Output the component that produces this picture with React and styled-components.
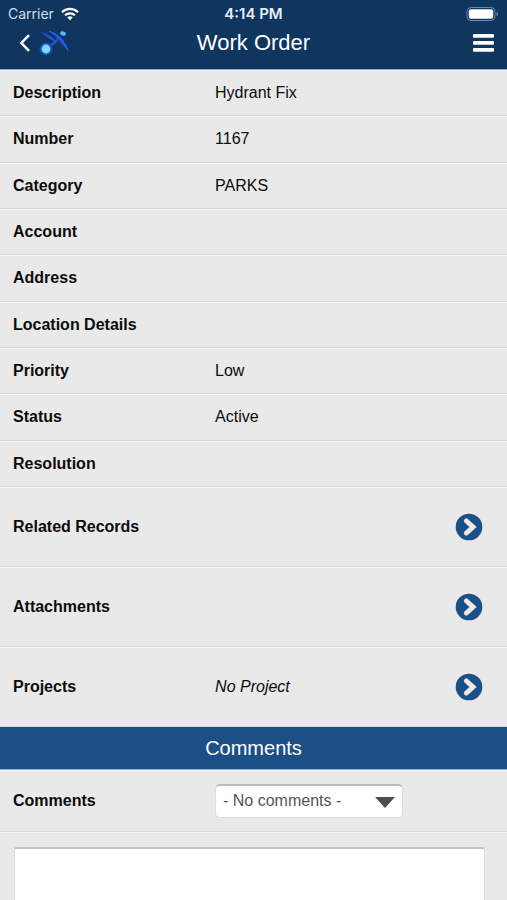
import React, { Fragment } from 'react';
import styled, { createGlobalStyle } from 'styled-components';

const facts = [
    ['Description', 'Hydrant Fix'],
    ['Number', '1167'],
    ['Category', 'PARKS'],
    ['Account', ''],
    ['Address', ''],
    ['Location Details', ''],
    ['Priority', 'Low'],
    ['Status', 'Active'],
    ['Resolution', ''],
];

const links = [
    { label: 'Related Records' },
    { label: 'Attachments' },
    { label: 'Projects', note: 'No Project' },
];

const WifiIcon = () => (
    <svg width='18' height='14' viewBox='0 0 18 14' fill='none' stroke='#fff' strokeWidth='2.2' aria-hidden='true'>
        <path d='M1 5.2a11.4 11.4 0 0 1 16 0' />
        <path d='M4 8.3a7.2 7.2 0 0 1 10 0' />
        <path d='M9 13.2L6.3 10.5a3.9 3.9 0 0 1 5.4 0z' fill='#fff' stroke='none' />
    </svg>
);

const BatteryIcon = () => (
    <svg width='33' height='16' viewBox='0 0 33 16' aria-hidden='true'>
        <rect x='1' y='1.5' width='28' height='13' rx='4' fill='none' stroke='#6a86a6' />
        <rect x='2.8' y='3.3' width='24.4' height='9.4' rx='2' fill='#fff' />
        <path d='M30.5 6v4q1.7-.6 1.7-2t-1.7-2z' fill='#6a86a6' />
    </svg>
);

const BackIcon = () => (
    <svg width='12' height='18' viewBox='0 0 12 18' fill='none' stroke='#fff' strokeWidth='2.5' aria-hidden='true'>
        <path d='M10 1.2L2.4 9l7.6 7.8' />
    </svg>
);

const Logo = () => (
    <svg width='32' height='28' viewBox='0 0 32 28' aria-hidden='true'>
        <path d='M2 3Q7 9 14 11.5Q11 7 2 3z' fill='#1a44c0' />
        <path d='M2 3Q10 4.5 19 13Q15 13 12 10.5Q8 6 2 3z' fill='#2155dc' />
        <path d='M9 1.5Q25 5 29.5 22.5Q25 18 21 13Q16 6 9 1.5z' fill='#1d4fd4' />
        <path d='M10 2Q23 7 29 21.5' fill='none' stroke='#3b78f0' strokeWidth='.8' />
        <path d='M18 10q-1 4-6 6' fill='none' stroke='#2257dc' strokeWidth='2' />
        <ellipse cx='24' cy='4.5' rx='3' ry='2' fill='#5fb0fb' transform='rotate(20 24 4.5)' />
        <circle cx='7' cy='20' r='6.5' fill='#1a4cc8' />
        <circle cx='7' cy='20' r='4.4' fill='#7fdcff' />
    </svg>
);

const MenuIcon = () => (
    <svg width='21' height='18' viewBox='0 0 21 18' fill='#fff' aria-hidden='true'>
        <rect width='21' height='3.8' rx='1' />
        <rect y='7' width='21' height='3.8' rx='1' />
        <rect y='14' width='21' height='3.8' rx='1' />
    </svg>
);

const GoIcon = () => (
    <svg width='28' height='28' viewBox='0 0 28 28' aria-hidden='true'>
        <circle cx='14' cy='14' r='13.3' fill='#1b4f86' />
        <path d='M11.4 8l6.6 6-6.6 6' fill='none' stroke='#ebebeb' strokeWidth='5' strokeLinecap='round' />
    </svg>
);

const App = () => (
    <Fragment>
        <GlobalStyle />
        <Page>
            <Header>
                <StatusBar>
                    <Carrier>Carrier <WifiIcon /></Carrier>
                    <Time>4:14 PM</Time>
                    <Battery><BatteryIcon /></Battery>
                </StatusBar>
                <NavBar>
                    <BackButton type='button' aria-label='Back'><BackIcon /><Logo /></BackButton>
                    <Title>Work Order</Title>
                    <MenuButton type='button' aria-label='Menu'><MenuIcon /></MenuButton>
                </NavBar>
            </Header>
            <Main>
                <FactList>
                    {facts.map(([label, value]) => (
                        <FactRow key={label}>
                            <dt>{label}</dt>
                            <dd>{value}</dd>
                        </FactRow>
                    ))}
                </FactList>
                {links.map(({ label, note }) => (
                    <LinkRow key={label}>
                        <strong>{label}</strong>
                        <em>{note}</em>
                        <GoButton type='button' aria-label={label}><GoIcon /></GoButton>
                    </LinkRow>
                ))}
                <SectionTitle>Comments</SectionTitle>
                <FilterRow>
                    <label htmlFor='comments'>Comments</label>
                    <SelectBox>
                        <Select id='comments'>
                            <option>- No comments -</option>
                        </Select>
                        <Arrow viewBox='0 0 20 11' aria-hidden='true'><path d='M0 0h20L10 11z' fill='#4d4d4d' /></Arrow>
                    </SelectBox>
                </FilterRow>
                <NoteRow>
                    <Note aria-label='New comment' />
                </NoteRow>
            </Main>
        </Page>
    </Fragment>
);

const GlobalStyle = createGlobalStyle`
    *, *::before, *::after {
        box-sizing: border-box;
    }

    body {
        margin: 0;
        background: #e9e9e9;
        color: #0c0c0c;
        font: 16px/20px "Liberation Sans", Arial, sans-serif;
    }

    button {
        display: flex;
        align-items: center;
        padding: 0;
        border: 0;
        background: none;
        cursor: pointer;
    }

    svg {
        display: block;
    }
`;

const Page = styled.div`
    display: flex;
    flex-direction: column;
    height: 100vh;
`;

const Header = styled.header`
    flex: none;
    background: #0e365f;
    color: #fff;
    border-bottom: 1px solid #8fa9c2;
`;

const StatusBar = styled.div`
    display: grid;
    grid-template-columns: 1fr auto 1fr;
    align-items: center;
    height: 27px;
    padding: 0 8px;
    font: 14px/16px Inter, sans-serif;
`;

const Carrier = styled.span`
    display: flex;
    align-items: center;
    gap: 7px;
    color: #d5dfe9;
`;

const Time = styled.time`
    font-size: 15px;
    font-weight: 600;
    color: #e6edf4;
`;

const Battery = styled.span`
    justify-self: end;
`;

const NavBar = styled.div`
    display: grid;
    grid-template-columns: 1fr auto 1fr;
    align-items: center;
    height: 42px;
    padding: 0 13px 11px;
`;

const BackButton = styled.button`
    gap: 8px;
    justify-self: start;
    padding-left: 6px;
`;

const MenuButton = styled.button`
    justify-self: end;
`;

const Title = styled.h1`
    margin: 0;
    font-size: 22px;
    font-weight: normal;
    line-height: 28px;
`;

const Main = styled.main`
    flex: 1;
    min-height: 0;
    overflow: hidden;
`;

const FactList = styled.dl`
    display: grid;
    grid-auto-rows: 1fr;
    min-height: 417px;
    margin: 0;
`;

const Row = styled.div`
    display: grid;
    grid-template-columns: 42% 1fr auto;
    align-items: center;
    padding: 0 13px;
    border-top: 1px solid #f7f7f7;
    border-bottom: 1px solid #d6d6d6;
`;

const FactRow = styled(Row)`
    dt {
        font-weight: bold;
    }

    dd {
        margin: 0;
    }
`;

const LinkRow = styled(Row)`
    grid-template-columns: 43% 1fr auto;
    padding: 25px 24px 25px 13px;
`;

const GoButton = styled.button`
    border-radius: 50%;
`;

const SectionTitle = styled.h2`
    margin: 0;
    padding: 9px 0;
    border-bottom: 1px solid #8fb0cd;
    background: #1b4f86;
    color: #fff;
    font-size: 20px;
    font-weight: normal;
    line-height: 24px;
    text-align: center;
`;

const FilterRow = styled(Row)`
    padding: 13px;

    label {
        font-weight: bold;
    }
`;

const SelectBox = styled.div`
    position: relative;
    width: 188px;
`;

const Select = styled.select`
    width: 100%;
    height: 34px;
    padding: 0 32px 2px 7px;
    border: 1px solid #dcdcdc;
    border-top: 2px solid #bcbcbc;
    border-radius: 5px;
    appearance: none;
    background: #fff;
    color: #555;
    font: inherit;
`;

const Arrow = styled.svg`
    position: absolute;
    right: 8px;
    top: 13px;
    width: 20px;
    height: 11px;
    pointer-events: none;
`;

const NoteRow = styled.div`
    padding: 14px 22px 14px 14px;
    border-top: 1px solid #f7f7f7;
`;

const Note = styled.textarea`
    display: block;
    width: 100%;
    height: 120px;
    border: 1px solid #dcdcdc;
    border-top: 2px solid #c2c2c2;
    border-radius: 2px;
    resize: none;
    background: #fff;
    font: inherit;
`;

export default App;
